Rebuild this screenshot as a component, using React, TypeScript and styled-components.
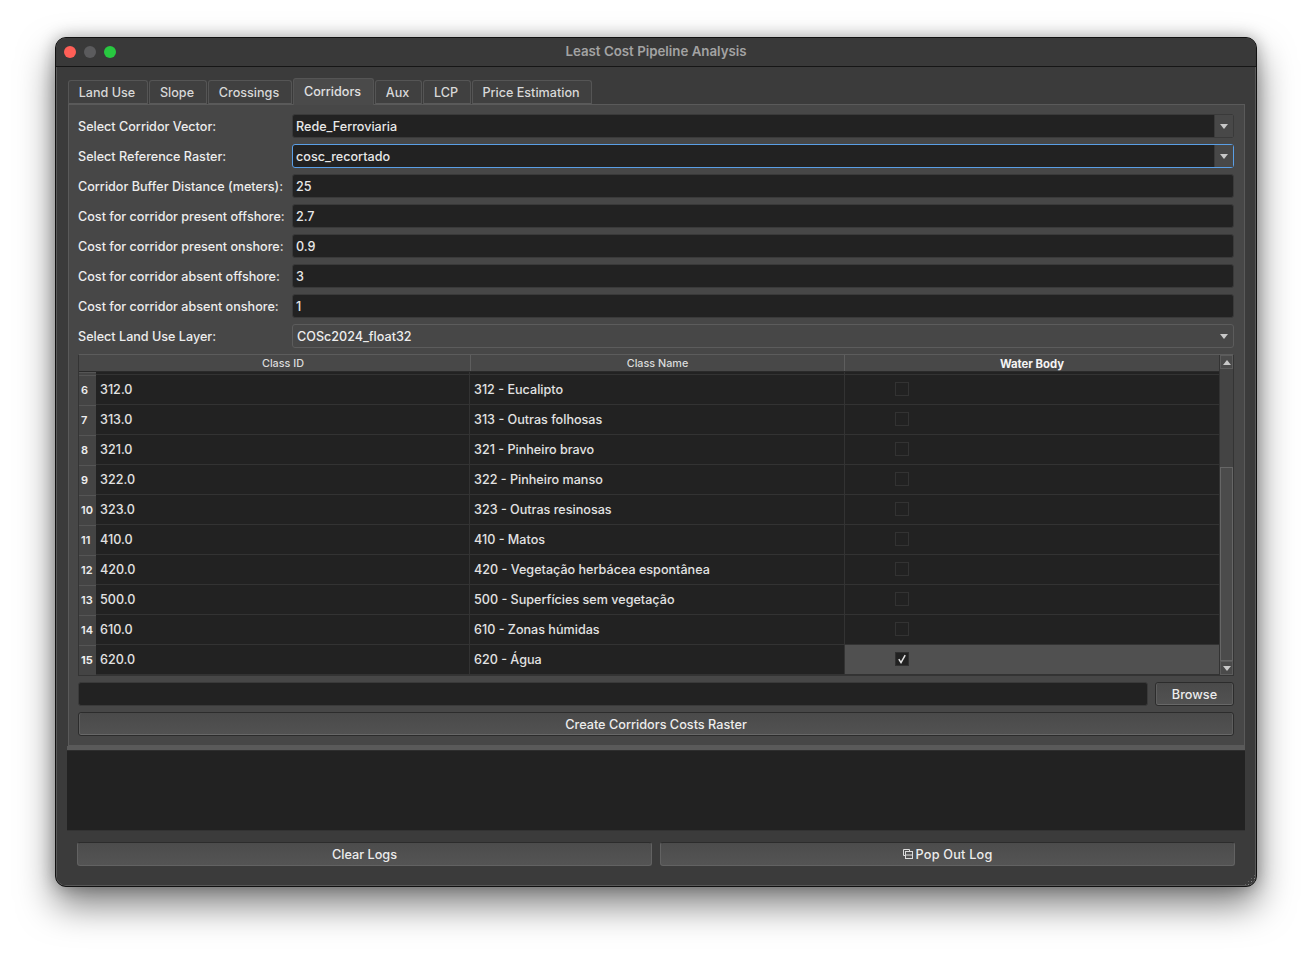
import React from "react";
import styled, { createGlobalStyle } from "styled-components";

const Global = createGlobalStyle`
  html, body { margin: 0; padding: 0; background: #fff; }
  #root { width: 1312px; height: 960px; overflow: hidden; }
  * { box-sizing: border-box; }
`;

const Page = styled.div`
  width: 1312px;
  height: 960px;
  padding: 37px 55px 0;
  font-family: Inter, "Liberation Sans", sans-serif;
  font-size: 12.6px;
  font-weight: 500;
  color: #e6e6e6;
`;

const Window = styled.div`
  position: relative;
  width: 1202px;
  height: 850px;
  background: #3b3b3b;
  border: 1px solid #111;
  border-radius: 11px;
  box-shadow: 0 0 0 0.5px #777 inset, 0 18px 36px rgba(0, 0, 0, 0.5), 0 0 16px rgba(0, 0, 0, 0.28);
  overflow: hidden;
  display: flex;
  flex-direction: column;
`;

const TitleBar = styled.div`
  position: relative;
  height: 29px;
  flex: none;
  padding-bottom: 3px;
  border-bottom: 1px solid #161616;
  background: #393939;
  display: flex;
  align-items: center;
  justify-content: center;
  font-weight: 600;
  font-size: 13.3px;
  color: #a3a3a3;
`;

const Lights = styled.div`
  position: absolute;
  left: 8px;
  top: 8px;
  display: flex;
  gap: 8px;
`;

const Light = styled.span<{ $c: string }>`
  width: 12px;
  height: 12px;
  border-radius: 50%;
  background: ${(p) => p.$c};
`;

const Body = styled.div`
  flex: 1;
  padding: 11px 11px 0 11px;
  display: flex;
  flex-direction: column;
`;

const TabBar = styled.div`
  height: 26px;
  margin-left: 1px;
  display: flex;
  align-items: flex-end;
  gap: 1px;
  position: relative;
  z-index: 1;
`;

const Tab = styled.div<{ $w: number; $on?: boolean }>`
  width: ${(p) => p.$w}px;
  height: ${(p) => (p.$on ? 27 : 24)}px;
  margin-bottom: ${(p) => (p.$on ? -1 : 0)}px;
  padding: 0 2px ${(p) => (p.$on ? 1 : 0)}px 0;
  display: flex;
  align-items: center;
  justify-content: center;
  border: 1px solid #555;
  border-bottom: ${(p) => (p.$on ? "none" : "1px solid #5a5a5a")};
  border-radius: 3px 3px 0 0;
  background: ${(p) => (p.$on ? "#4a4a4a" : "#404040")};
  color: ${(p) => (p.$on ? "#e0e0e0" : "#d8d8d8")};
`;

const Pane = styled.div`
  margin-left: 1px;
  width: 1177px;
  height: 642px;
  background: #474747;
  border: 1px solid #5a5a5a;
  padding: 9px 10px 0 9px;
  display: flex;
  flex-direction: column;
  gap: 6px;
`;

const FormRow = styled.div`
  display: grid;
  grid-template-columns: 214px 942px;
  align-items: center;
  height: 24px;
  color: #ededed;
`;

const Field = styled.div<{ $focus?: boolean }>`
  height: 24px;
  border-radius: 3px;
  background: #222;
  padding-left: 3px;
  display: flex;
  align-items: center;
  border: 1px solid ${(p) => (p.$focus ? "#5a9fe6" : "#3a3a3a")};
  color: #e8e8e8;
`;

const FieldText = styled.span`
  flex: 1;
`;

const DropButton = styled.span<{ $flat?: boolean }>`
  width: 19px;
  align-self: stretch;
  flex: none;
  display: flex;
  align-items: center;
  justify-content: center;
  background: ${(p) => (p.$flat ? "transparent" : "#484848")};
  border-left: ${(p) => (p.$flat ? "none" : "1px solid #3a3a3a")};
`;

const Arrow = styled.span<{ $up?: boolean }>`
  width: 0;
  height: 0;
  border-left: 4.5px solid transparent;
  border-right: 4.5px solid transparent;
  ${(p) =>
    p.$up
      ? "border-bottom: 5px solid #c8c8c8;"
      : "border-top: 5px solid #c8c8c8;"}
`;

const LandCombo = styled.div`
  height: 24px;
  display: flex;
  align-items: center;
  border: 1px solid #5c5c5c;
  border-radius: 3px;
  background: #474747;
  padding-left: 4px;
  color: #ededed;
`;

const Table = styled.div`
  height: 322px;
  display: flex;
  border: 1px solid #343434;
  border-top-color: #5c5c5c;
  background: #222;
`;

const TableMain = styled.div`
  flex: 1;
  display: flex;
  flex-direction: column;
  overflow: hidden;
`;

const HeaderRow = styled.div`
  flex: none;
  height: 17px;
  display: grid;
  grid-template-columns: 17px 374px 374px 375px;
  background: #484848;
  border-bottom: 1px solid #2a2a2a;
`;

const HeaderCell = styled.div<{ $bold?: boolean; $first?: boolean }>`
  display: flex;
  align-items: center;
  justify-content: center;
  padding-top: 1px;
  border-left: ${(p) => (p.$first ? "none" : "1px solid #5e5e5e")};
  font-size: ${(p) => (p.$bold ? 11.3 : 10.8)}px;
  font-weight: ${(p) => (p.$bold ? 700 : 500)};
  color: ${(p) => (p.$bold ? "#f4f4f4" : "#dcdcdc")};
`;

const Corner = styled.div``;

const BodyColumns = "17px 374px 375px 374px";

const PeekRow = styled.div`
  flex: none;
  height: 3px;
  display: grid;
  grid-template-columns: ${BodyColumns};
  border-bottom: 1px solid #333;
`;

const Row = styled.div`
  flex: none;
  height: 30px;
  display: grid;
  grid-template-columns: ${BodyColumns};
  border-bottom: 1px solid #333;
`;

const RowHead = styled.div<{ $on?: boolean }>`
  display: flex;
  align-items: center;
  padding: 0 0 2px 2px;
  background: #444;
  border-top: 1px solid #555;
  font-size: 11px;
  font-weight: ${(p) => (p.$on ? 700 : 600)};
  color: #eee;
  margin-bottom: -1px;
`;

const Cell = styled.div`
  display: flex;
  align-items: center;
  padding-left: 4px;
  border-right: 1px solid #333;
  color: #e2e2e2;
`;

const CheckCell = styled.div<{ $on?: boolean }>`
  display: flex;
  align-items: center;
  padding: 0 0 1px 50px;
  background: ${(p) => (p.$on ? "#505050" : "transparent")};
`;

const Check = styled.div<{ $on?: boolean }>`
  width: 14px;
  height: 14px;
  border: 1px solid ${(p) => (p.$on ? "#303030" : "#333")};
  background: #222;
  display: flex;
  align-items: center;
  justify-content: center;
`;

const Scrollbar = styled.div`
  flex: none;
  width: 14px;
  background: #444;
  border-left: 1px solid #333;
  display: flex;
  flex-direction: column;
`;

const ScrollBtn = styled.div`
  flex: none;
  height: 14px;
  background: #4a4a4a;
  border: 1px solid #5c5c5c;
  display: flex;
  align-items: center;
  justify-content: center;
`;

const ScrollTrack = styled.div`
  flex: 1;
  display: flex;
  flex-direction: column;
  justify-content: flex-end;
`;

const ScrollHandle = styled.div`
  height: 194px;
  background: #4b4b4b;
  border: 1px solid #666;
`;

const PathRow = styled.div`
  display: grid;
  grid-template-columns: 1070px 79px;
  justify-content: space-between;
  height: 24px;
`;

const PathField = styled.div`
  background: #222;
  border: 1px solid #3a3a3a;
  border-radius: 3px;
`;

const Button = styled.div`
  height: 24px;
  display: flex;
  align-items: center;
  justify-content: center;
  gap: 3px;
  border: 1px solid #2c2c2c;
  border-radius: 3px;
  background: linear-gradient(#4a4a4a, #525252);
  box-shadow: inset 0 -1px 0 #686868, inset 1px 0 0 #5e5e5e, inset -1px 0 0 #5e5e5e;
  color: #ececec;
  font-size: 12.7px;
`;

const FooterButton = styled(Button)`
  border-color: #2c2c2c #626262 #626262;
  box-shadow: none;
  background: linear-gradient(#4c4c4c, #545454);
`;

const PopLabel = styled.span`
  letter-spacing: 0.2px;
`;

const Splitter = styled.div`
  flex: none;
  height: 5px;
  width: 1178px;
  background: #5a5a5a;
  border-bottom: 1px solid #2e2e2e;
`;

const Log = styled.div`
  flex: none;
  width: 1178px;
  height: 80px;
  background: #222;
  border-bottom: 1px solid #333;
`;

const Footer = styled.div`
  margin: 11px 0 0 10px;
  width: 1158px;
  display: grid;
  grid-template-columns: 575px 575px;
  justify-content: space-between;
`;

const Grip = styled.div`
  position: absolute;
  right: 0;
  bottom: 0;
  width: 12px;
  height: 12px;
  background-image: radial-gradient(circle, #8a8a8a 0.7px, transparent 1px);
  background-size: 3px 3px;
  clip-path: polygon(100% 0, 100% 100%, 0 100%);
`;

const tabs: [string, number][] = [
  ["Land Use", 80],
  ["Slope", 58],
  ["Crossings", 84],
  ["Corridors", 81],
  ["Aux", 47],
  ["LCP", 48],
  ["Price Estimation", 120],
];

const rows: [number, string, string][] = [
  [6, "312.0", "312 - Eucalipto"],
  [7, "313.0", "313 - Outras folhosas"],
  [8, "321.0", "321 - Pinheiro bravo"],
  [9, "322.0", "322 - Pinheiro manso"],
  [10, "323.0", "323 - Outras resinosas"],
  [11, "410.0", "410 - Matos"],
  [12, "420.0", "420 - Vegetação herbácea espontânea"],
  [13, "500.0", "500 - Superfícies sem vegetação"],
  [14, "610.0", "610 - Zonas húmidas"],
  [15, "620.0", "620 - Água"],
];

const fields: [string, string][] = [
  ["Corridor Buffer Distance (meters):", "25"],
  ["Cost for corridor present offshore:", "2.7"],
  ["Cost for corridor present onshore:", "0.9"],
  ["Cost for corridor absent offshore:", "3"],
  ["Cost for corridor absent onshore:", "1"],
];

export default function App() {
  return (
    <Page>
      <Global />
      <Window>
        <TitleBar>
          <Lights>
            <Light $c="#ff5f57" />
            <Light $c="#5b5b5d" />
            <Light $c="#28c840" />
          </Lights>
          Least Cost Pipeline Analysis
        </TitleBar>
        <Body>
          <TabBar>
            {tabs.map(([t, w]) => (
              <Tab key={t} $w={w} $on={t === "Corridors"}>
                {t}
              </Tab>
            ))}
          </TabBar>
          <Pane>
            <FormRow>
              <span>Select Corridor Vector:</span>
              <Field>
                <FieldText>Rede_Ferroviaria</FieldText>
                <DropButton>
                  <Arrow />
                </DropButton>
              </Field>
            </FormRow>
            <FormRow>
              <span>Select Reference Raster:</span>
              <Field $focus>
                <FieldText>cosc_recortado</FieldText>
                <DropButton>
                  <Arrow />
                </DropButton>
              </Field>
            </FormRow>
            {fields.map(([l, v]) => (
              <FormRow key={l}>
                <span>{l}</span>
                <Field>
                  <FieldText>{v}</FieldText>
                </Field>
              </FormRow>
            ))}
            <FormRow>
              <span>Select Land Use Layer:</span>
              <LandCombo>
                <FieldText>COSc2024_float32</FieldText>
                <DropButton $flat>
                  <Arrow />
                </DropButton>
              </LandCombo>
            </FormRow>
            <Table>
              <TableMain>
                <HeaderRow>
                  <Corner />
                  <HeaderCell $first>Class ID</HeaderCell>
                  <HeaderCell>Class Name</HeaderCell>
                  <HeaderCell $bold>Water Body</HeaderCell>
                </HeaderRow>
                <PeekRow>
                  <RowHead />
                  <Cell />
                  <Cell />
                  <div />
                </PeekRow>
                {rows.map(([n, id, name]) => (
                  <Row key={n}>
                    <RowHead $on={n === 15}>{n}</RowHead>
                    <Cell>{id}</Cell>
                    <Cell>{name}</Cell>
                    <CheckCell $on={n === 15}>
                      <Check $on={n === 15}>
                        {n === 15 && (
                          <svg width="10" height="10" viewBox="0 0 10 10">
                            <path d="M1.8 5.2 L4 8.6 L8.2 1.2" fill="none" stroke="#e4e4e4" strokeWidth="1.5" />
                          </svg>
                        )}
                      </Check>
                    </CheckCell>
                  </Row>
                ))}
              </TableMain>
              <Scrollbar>
                <ScrollBtn>
                  <Arrow $up />
                </ScrollBtn>
                <ScrollTrack>
                  <ScrollHandle />
                </ScrollTrack>
                <ScrollBtn>
                  <Arrow />
                </ScrollBtn>
              </Scrollbar>
            </Table>
            <PathRow>
              <PathField />
              <Button>Browse</Button>
            </PathRow>
            <Button>Create Corridors Costs Raster</Button>
          </Pane>
          <Splitter />
          <Log />
          <Footer>
            <FooterButton>Clear Logs</FooterButton>
            <FooterButton>
              <svg width="10" height="10" viewBox="0 0 10 10" fill="none" stroke="#dcdcdc" strokeWidth="1">
                <path d="M6.5 2.5V0.5H0.5V6.5H2.5" />
                <rect x="2.5" y="2.5" width="7" height="7" />
                <path d="M2.5 6H9.5" />
              </svg>
              <PopLabel>Pop Out Log</PopLabel>
            </FooterButton>
          </Footer>
        </Body>
        <Grip />
      </Window>
    </Page>
  );
}
